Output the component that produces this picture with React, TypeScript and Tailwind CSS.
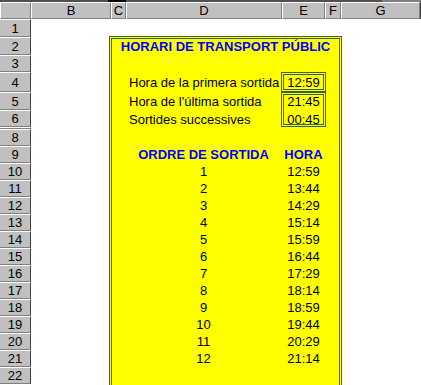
import React from "react";

const font = { fontFamily: '"Liberation Sans", Arial, sans-serif' };

const cols = [
  { label: "", w: "w-[31px]" },
  { label: "B", w: "w-[80px]" },
  { label: "C", w: "w-[15px]" },
  { label: "D", w: "w-[156px]" },
  { label: "E", w: "w-[43px]" },
  { label: "F", w: "w-[16px]" },
  { label: "G", w: "w-[79px]" },
];

// row 7 is hidden in the sheet, so only a thin 2px line is left for it
const rowHeads = [
  { label: "1", h: "h-[18px]" },
  { label: "2", h: "h-[18px]" },
  { label: "3", h: "h-[17px]" },
  { label: "4", h: "h-[20px]" },
  { label: "5", h: "h-[18px]" },
  { label: "6", h: "h-[17px]" },
  { label: "", h: "h-[2px]" },
  ...Array.from({ length: 15 }, (_, i) => ({ label: String(i + 8), h: "h-[17px]" })),
];

const sortides = [
  ["1", "12:59"],
  ["2", "13:44"],
  ["3", "14:29"],
  ["4", "15:14"],
  ["5", "15:59"],
  ["6", "16:44"],
  ["7", "17:29"],
  ["8", "18:14"],
  ["9", "18:59"],
  ["10", "19:44"],
  ["11", "20:29"],
  ["12", "21:14"],
];

const box = "border-[3px] border-double border-[#306060]";

export default function App() {
  return (
    <div className="w-[421px] h-[385px] overflow-hidden bg-white text-[13px] text-black" style={font}>
      {/* strip above the column headers */}
      <div className="flex h-[2px]">
        <div className="w-[108px] bg-[#505050]" />
        <div className="w-[18px] bg-black" />
        <div className="w-[256px] bg-[#505050]" />
        <div className="flex-1 bg-[#808080]" />
      </div>

      {/* column headers */}
      <div className="flex h-[17px]">
        {cols.map((c) => (
          <div
            key={c.w + c.label}
            className={`${c.w} flex items-center justify-center border-t border-l border-t-white border-l-white border-r border-b border-r-[#808080] border-b-[#808080] bg-[#c0c0c0] leading-none`}
          >
            {c.label}
          </div>
        ))}
        <div className="w-[1px] bg-[#404040]" />
      </div>

      <div className="flex">
        {/* row headers */}
        <div className="w-[31px] flex flex-col">
          {rowHeads.map((r, i) => (
            <div
              key={i}
              className={`${r.h} flex items-center justify-center border-t border-t-white border-b border-b-[#808080] border-r border-r-[#404040] bg-[#c0c0c0] leading-none`}
            >
              {r.label}
            </div>
          ))}
        </div>

        {/* sheet */}
        <div className="flex flex-1">
          <div className="w-[78px]" />
          <div className={`w-[233px] mt-[17px] h-[400px] bg-[#ffff00] ${box}`}>
            <div className="h-[15px] leading-[15px] text-center font-bold text-[#0000ff] whitespace-nowrap">
              HORARI DE TRANSPORT PÚBLIC
            </div>
            <div className="h-[18px]" />

            <div className="flex">
              <div className="w-[14px]" />
              <div className="w-[155px] pl-[3px] whitespace-nowrap">
                <div className="h-[20px] pt-[4px] leading-[14px]">Hora de la primera sortida</div>
                <div className="h-[35px]">
                  <div className="pt-[3px] leading-[14px]">Hora de l'última sortida</div>
                  <div className="mt-[4px] leading-[14px]">Sortides successives</div>
                </div>
              </div>
              <div className="w-[45px] text-center">
                <div className={`h-[20px] pt-[1px] leading-[14px] ${box}`}>12:59</div>
                <div className={`h-[35px] ${box}`}>
                  <div className="leading-[14px]">21:45</div>
                  <div className="mt-[3px] leading-[15px]">00:45</div>
                </div>
              </div>
            </div>

            <div className="h-[2px]" />
            <div className="h-[17px]" />

            <div className="flex h-[17px] leading-[17px] font-bold text-[#0000ff]">
              <div className="w-[14px]" />
              <div className="w-[155px] text-center">ORDRE DE SORTIDA</div>
              <div className="w-[45px] text-center">HORA</div>
            </div>
            {sortides.map(([n, t]) => (
              <div key={n} className="flex h-[17px] leading-[17px]">
                <div className="w-[14px]" />
                <div className="w-[155px] text-center">{n}</div>
                <div className="w-[45px] text-center">{t}</div>
              </div>
            ))}
          </div>
          <div className="flex-1" />
        </div>
      </div>
    </div>
  );
}
